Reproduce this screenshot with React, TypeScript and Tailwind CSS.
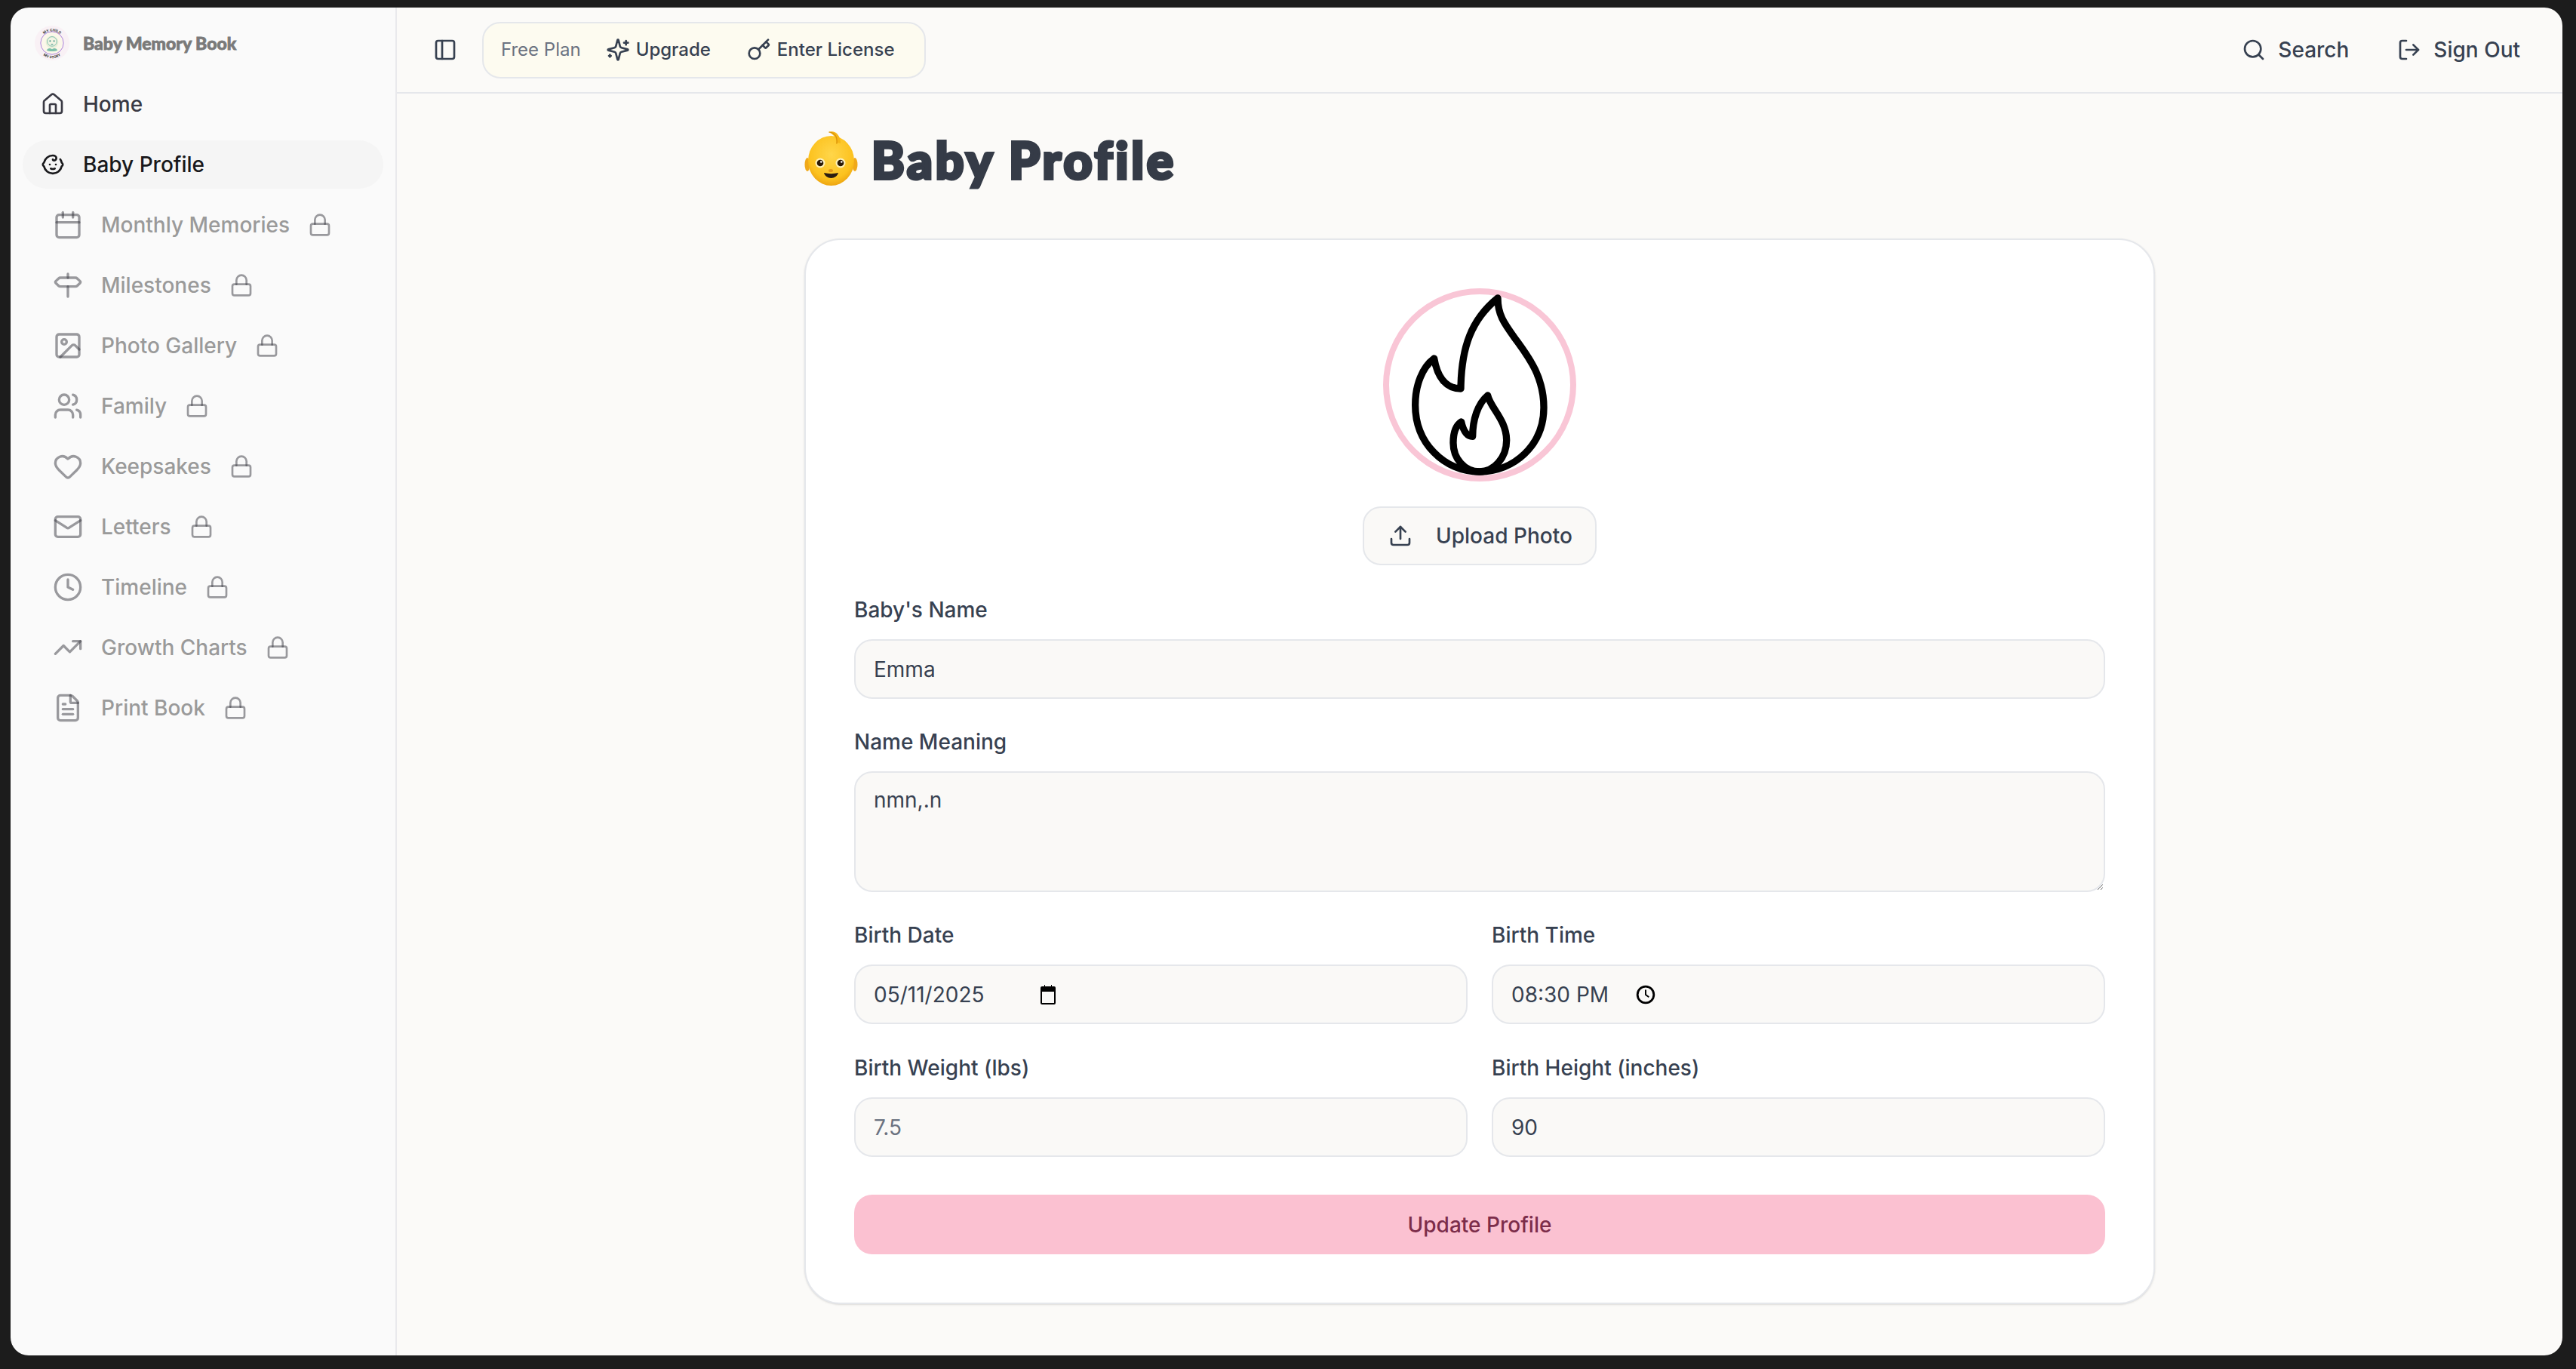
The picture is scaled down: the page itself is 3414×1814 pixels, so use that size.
import {
  Baby,
  Calendar,
  Clock,
  FileText,
  Heart,
  Home,
  Image,
  Key,
  Lock,
  LogOut,
  Mail,
  PanelLeft,
  Search,
  Signpost,
  TrendingUp,
  Upload,
  Users,
} from "lucide-react";

const lockedItems = [
  { icon: Calendar, label: "Monthly Memories" },
  { icon: Signpost, label: "Milestones" },
  { icon: Image, label: "Photo Gallery" },
  { icon: Users, label: "Family" },
  { icon: Heart, label: "Keepsakes" },
  { icon: Mail, label: "Letters" },
  { icon: Clock, label: "Timeline" },
  { icon: TrendingUp, label: "Growth Charts" },
  { icon: FileText, label: "Print Book" },
];

const inputClass =
  "h-[79px] w-full rounded-[24px] border-2 border-[#e5e7eb] bg-[#faf9f7] px-[24px] text-[28px] text-[#374151] outline-none placeholder:text-[#6b7280]";
const labelClass = "mb-[19px] block h-[40px] text-[28px] leading-[40px] font-medium text-[#374151]";

function LogoMark() {
  return (
    <svg viewBox="0 0 44 44" className="h-[46px] w-[46px] shrink-0">
      <defs>
        <path id="logo-top" d="M7 22a15 15 0 0 1 30 0" />
        <path id="logo-bottom" d="M4.5 24a17.500 17.500 0 0 0 35 0" />
      </defs>
      <circle cx="22" cy="22" r="22" fill="#f9f1f5" />
      <circle cx="22" cy="22" r="14.500" fill="#fbf7ea" stroke="#9c6ad8" strokeWidth="0.8" />
      <circle cx="22" cy="21" r="8" fill="#e9efd8" />
      <circle cx="22" cy="20" r="6" fill="#f3f4e4" stroke="#6bb5a6" strokeWidth="0.8" />
      <circle cx="19.500" cy="19.500" r="1" fill="#4f9c8c" />
      <circle cx="24.500" cy="19.500" r="1" fill="#4f9c8c" />
      <path d="M20 23h4l-2 1.500z" fill="#4f9c8c" />
      <path d="M15 31c2-3 5-3 7-1 2-2 5-2 7 1-3 2-11 2-14 0z" fill="#7dbfa9" />
      <text fontSize="4.500" fontWeight="700" fill="#333" fontFamily="Inter, sans-serif">
        <textPath href="#logo-top" startOffset="50%" textAnchor="middle">MY CHILD</textPath>
      </text>
      <text fontSize="4.500" fontWeight="700" fill="#333" fontFamily="Inter, sans-serif">
        <textPath href="#logo-bottom" startOffset="50%" textAnchor="middle">MY STORY</textPath>
      </text>
    </svg>
  );
}

function BabyEmoji() {
  return (
    <svg viewBox="0 0 72 72" className="h-[72px] w-[72px] shrink-0">
      <defs>
        <radialGradient id="baby-skin" cx="50%" cy="38%" r="68%">
          <stop offset="0%" stopColor="#ffd64a" />
          <stop offset="70%" stopColor="#fcc21f" />
          <stop offset="100%" stopColor="#e89a0c" />
        </radialGradient>
      </defs>
      <ellipse cx="4" cy="44" rx="3.500" ry="9" fill="#f0a91a" />
      <ellipse cx="67" cy="44" rx="3.500" ry="9" fill="#f0a91a" />
      <ellipse cx="35.500" cy="39" rx="30.500" ry="33" fill="url(#baby-skin)" />
      <path d="M32 1c8-3 16 3 16 15-3-1-4-1-6 1 2-7-3-13-10-16z" fill="#f6b617" />
      <path d="M33 1c7 1 11 6 10 15" fill="none" stroke="#d68f0a" strokeWidth="1.200" strokeLinecap="round" />
      <circle cx="21" cy="42" r="6.500" fill="#fff2b8" />
      <circle cx="48" cy="42" r="6.500" fill="#fff2b8" />
      <circle cx="21" cy="42" r="4.300" fill="#2b1a06" />
      <circle cx="48" cy="42" r="4.300" fill="#2b1a06" />
      <circle cx="22.300" cy="40.500" r="1.300" fill="#fff" />
      <circle cx="49.300" cy="40.500" r="1.300" fill="#fff" />
      <ellipse cx="35" cy="52" rx="3" ry="2" fill="#e59a1a" />
      <path d="M26 55c6 1.500 13 1.500 19 0-1 4-5 7-9.500 7s-8.500-3-9.500-7z" fill="#2b1d12" />
    </svg>
  );
}

function FlameAvatar() {
  return (
    <svg viewBox="0 0 1080 1200" className="absolute -top-[8px] -left-[8px] h-[400px] w-[360px] -translate-x-[53px] -translate-y-[22px]" fill="none" stroke="#000" strokeWidth="28" strokeLinejoin="round" strokeLinecap="round">
      <path d="M615 105C615 170 640 205 680 260C730 330 798 410 798 540C798 690 680 795 543 795C400 795 287 680 287 530C287 450 315 380 362 345C375 420 410 465 468 465C470 300 510 190 615 105Z" />
      <path d="M575 492C585 540 650 590 650 670C650 740 600 795 543 795C480 795 438 740 438 680C438 640 450 610 470 597C480 640 495 655 515 655C515 590 535 525 575 492Z" />
    </svg>
  );
}

function UpgradeSparkles() {
  return (
    <svg viewBox="0 0 24 24" className="h-[32px] w-[32px]" fill="none" stroke="currentColor" strokeWidth="2" strokeLinecap="round" strokeLinejoin="round">
      <path d="M9.937 15.5A2 2 0 0 0 8.5 14.063l-6.135-1.582a.5.5 0 0 1 0-.962L8.5 9.936A2 2 0 0 0 9.937 8.5l1.582-6.135a.5.5 0 0 1 .963 0L14.063 8.5A2 2 0 0 0 15.5 9.937l6.135 1.581a.5.5 0 0 1 0 .964L15.5 14.063a2 2 0 0 0-1.437 1.437l-1.582 6.135a.5.5 0 0 1-.963 0z" />
      <path d="M20 3v4" />
      <path d="M22 5h-4" />
      <path d="M4 17v2" />
      <path d="M5 18H3" />
    </svg>
  );
}

function Field({ label, children }: { label: string; children: React.ReactNode }) {
  return (
    <div>
      <label className={labelClass}>{label}</label>
      {children}
    </div>
  );
}

export default function App() {
  return (
    <div className="flex h-screen w-full bg-[#1c1c1c] pt-[10px] pr-[18px] pb-[18px] pl-[14px] font-['Inter',sans-serif]">
      <div className="flex min-w-0 flex-1 overflow-hidden rounded-[24px]">
        {/* Sidebar */}
        <aside className="w-[512px] shrink-0 border-r-2 border-[#e9e9ec] bg-[#fafafa]">
          <div className="flex h-[94px] items-center gap-[18px] pl-[32px]">
            <LogoMark />
            <span className="font-['Lato',sans-serif] text-[23px] font-black text-[#7a7a7a] [-webkit-text-stroke:0.8px_#7a7a7a]">Baby Memory Book</span>
          </div>
          <nav className="mt-[2px] flex flex-col gap-[16px] px-[16px]">
            <div className="flex h-[64px] items-center gap-[24px] pl-[24px] text-[28px] font-medium text-[#3a3a44]">
              <Home className="h-[32px] w-[32px]" />
              Home
            </div>
            <div className="flex h-[64px] items-center gap-[24px] rounded-full bg-[#f5f5f5] pl-[24px] text-[28px] font-medium text-[#18181b]">
              <Baby className="h-[32px] w-[32px]" />
              Baby Profile
            </div>
            {lockedItems.map((item) => (
              <div key={item.label} className="flex h-[64px] items-center pl-[40px] text-[28px] font-medium text-[#9a9a9a]">
                <item.icon className="h-[40px] w-[40px] text-[#37373f]" strokeOpacity={0.5} />
                <span className="mx-[24px]">{item.label}</span>
                <Lock className="h-[32px] w-[32px] text-[#37373f]" strokeOpacity={0.5} />
              </div>
            ))}
          </nav>
        </aside>

        {/* Main */}
        <div className="flex min-w-0 flex-1 flex-col bg-[#fbfaf8]">
          <header className="flex h-[114px] shrink-0 items-center justify-between border-b-2 border-[#e5e7eb] pr-[56px] pl-[48px]">
            <div className="flex items-center gap-[33px]">
              <PanelLeft className="h-[32px] w-[32px] text-[#374151]" />
              <div className="flex h-[75px] items-center rounded-[24px] border-2 border-[#e5e7eb] bg-[#fdfbf0] pr-[39px] pl-[23px] text-[24px]">
                <span className="text-[#6b7280]">Free Plan</span>
                <div className="ml-[33px] flex items-center gap-[8px] font-medium text-[#374151]">
                  <UpgradeSparkles />
                  Upgrade
                </div>
                <div className="ml-[48px] flex items-center gap-[8px] font-medium text-[#374151]">
                  <Key className="h-[32px] w-[32px]" />
                  Enter License
                </div>
              </div>
            </div>
            <div className="flex items-center gap-[64px] text-[28px] font-medium text-[#374151]">
              <div className="flex items-center gap-[16px]">
                <Search className="h-[32px] w-[32px]" />
                Search
              </div>
              <div className="flex items-center gap-[16px]">
                <LogOut className="h-[32px] w-[32px]" />
                Sign Out
              </div>
            </div>
          </header>

          <main className="min-h-0 flex-1 pt-[50px] pl-[540px]">
            <div className="flex h-[72px] items-center gap-[17px]">
              <BabyEmoji />
              <h1 className="pt-[3px] font-['Lato',sans-serif] text-[66px] leading-none font-black tracking-[3.8px] text-[#353b47] [-webkit-text-stroke:4px_#353b47]">Baby Profile</h1>
            </div>

            <div className="mt-[70px] w-[1790px] rounded-[48px] border-2 border-[#e5e7eb] bg-white p-[64px] shadow-sm">
              <div className="flex flex-col items-center">
                <div className="relative h-[256px] w-[256px] rounded-full border-[8px] border-[#f9c6d6]">
                  <FlameAvatar />
                </div>
                <button className="mt-[33px] flex h-[78px] w-[310px] items-center gap-[31px] rounded-[24px] border-2 border-[#e5e7eb] bg-[#faf9f7] pl-[32px] text-[28px] font-medium text-[#374151]">
                  <Upload className="h-[32px] w-[32px]" />
                  Upload Photo
                </button>
              </div>

              <div className="mt-[39px] flex flex-col gap-[37px]">
                <Field label="Baby's Name">
                  <input className={inputClass} defaultValue="Emma" />
                </Field>
                <Field label="Name Meaning">
                  <textarea className="block h-[160px] w-full rounded-[24px] border-2 border-[#e5e7eb] bg-[#faf9f7] px-[24px] py-[16px] text-[28px] leading-[40px] text-[#374151] outline-none" defaultValue="nmn,.n" />
                </Field>
                <div className="grid grid-cols-2 gap-[32px]">
                  <Field label="Birth Date">
                    <div className={`${inputClass} flex items-center`}>
                      <span className="w-[220px]">05/11/2025</span>
                      <svg viewBox="0 0 22 26" className="h-[26px] w-[22px]">
                        <path d="M3 2h3V0h1v2h8V0h1v2h3a2 2 0 0 1 2 2v20a2 2 0 0 1-2 2H3a2 2 0 0 1-2-2V4a2 2 0 0 1 2-2zm0 7v15h16V9z" fill="#000" />
                      </svg>
                    </div>
                  </Field>
                  <Field label="Birth Time">
                    <div className={`${inputClass} flex items-center`}>
                      <span className="w-[165px]">08:30 PM</span>
                      <svg viewBox="0 0 24 24" className="h-[26px] w-[26px]" fill="none" stroke="#000" strokeWidth="2.600">
                        <circle cx="12" cy="12" r="10" />
                        <path d="M12 6v6l4 3" strokeWidth="1.800" />
                      </svg>
                    </div>
                  </Field>
                </div>
                <div className="mt-[1px] grid grid-cols-2 gap-[32px]">
                  <Field label="Birth Weight (lbs)">
                    <input className={inputClass} placeholder="7.5" />
                  </Field>
                  <Field label="Birth Height (inches)">
                    <input className={inputClass} defaultValue="90" />
                  </Field>
                </div>
              </div>

              <button className="mt-[50px] block h-[79px] w-full rounded-[24px] bg-[#fbc1d1] text-center text-[28px] font-medium text-[#7c2d4a]">
                Update Profile
              </button>
            </div>
          </main>
        </div>
      </div>
    </div>
  );
}
